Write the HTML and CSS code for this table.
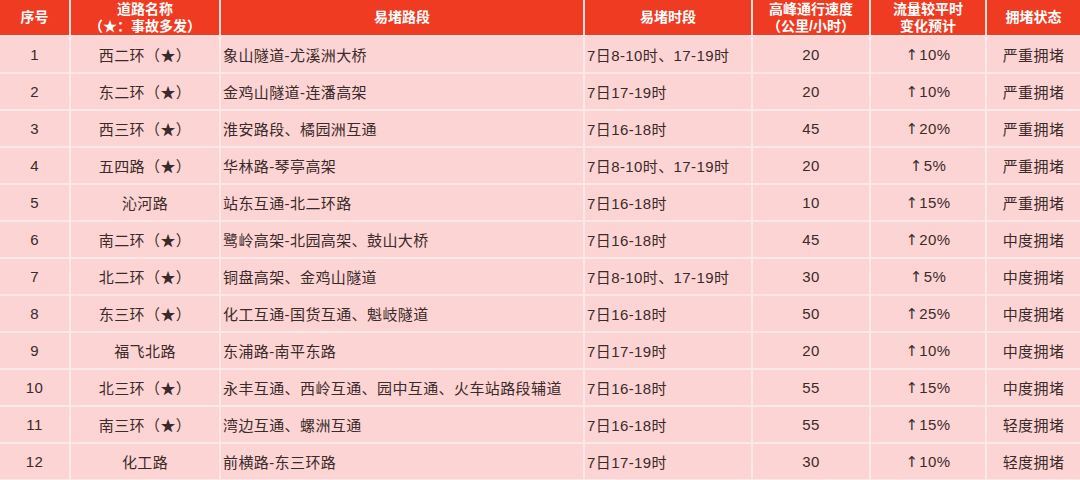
FILE: index.html
```html
<!DOCTYPE html>
<html lang="zh">
<head>
<meta charset="utf-8">
<link rel="stylesheet" href="styles.css">
</head>
<body>
<table class="traffic">
  <colgroup>
    <col class="c1"><col class="c2"><col class="c3"><col class="c4"><col class="c5"><col class="c6"><col class="c7">
  </colgroup>
  <thead>
    <tr>
      <th>序号</th>
      <th><div class="hl">道路名称</div><div class="hl">（★：事故多发）</div></th>
      <th>易堵路段</th>
      <th>易堵时段</th>
      <th><div class="hl">高峰通行速度</div><div class="hl">（公里/小时）</div></th>
      <th><div class="hl">流量较平时</div><div class="hl">变化预计</div></th>
      <th>拥堵状态</th>
    </tr>
  </thead>
  <tbody>
    <tr><td>1</td><td>西二环（★）</td><td class="l">象山隧道-尤溪洲大桥</td><td class="l">7日8-10时、17-19时</td><td>20</td><td><span class="up">↑</span>10%</td><td>严重拥堵</td></tr>
    <tr><td>2</td><td>东二环（★）</td><td class="l">金鸡山隧道-连潘高架</td><td class="l">7日17-19时</td><td>20</td><td><span class="up">↑</span>10%</td><td>严重拥堵</td></tr>
    <tr><td>3</td><td>西三环（★）</td><td class="l">淮安路段、橘园洲互通</td><td class="l">7日16-18时</td><td>45</td><td><span class="up">↑</span>20%</td><td>严重拥堵</td></tr>
    <tr><td>4</td><td>五四路（★）</td><td class="l">华林路-琴亭高架</td><td class="l">7日8-10时、17-19时</td><td>20</td><td><span class="up">↑</span>5%</td><td>严重拥堵</td></tr>
    <tr><td>5</td><td>沁河路</td><td class="l">站东互通-北二环路</td><td class="l">7日16-18时</td><td>10</td><td><span class="up">↑</span>15%</td><td>严重拥堵</td></tr>
    <tr><td>6</td><td>南二环（★）</td><td class="l">鹭岭高架-北园高架、鼓山大桥</td><td class="l">7日16-18时</td><td>45</td><td><span class="up">↑</span>20%</td><td>中度拥堵</td></tr>
    <tr><td>7</td><td>北二环（★）</td><td class="l">铜盘高架、金鸡山隧道</td><td class="l">7日8-10时、17-19时</td><td>30</td><td><span class="up">↑</span>5%</td><td>中度拥堵</td></tr>
    <tr><td>8</td><td>东三环（★）</td><td class="l">化工互通-国货互通、魁岐隧道</td><td class="l">7日16-18时</td><td>50</td><td><span class="up">↑</span>25%</td><td>中度拥堵</td></tr>
    <tr><td>9</td><td>福飞北路</td><td class="l">东浦路-南平东路</td><td class="l">7日17-19时</td><td>20</td><td><span class="up">↑</span>10%</td><td>中度拥堵</td></tr>
    <tr><td>10</td><td>北三环（★）</td><td class="l">永丰互通、西岭互通、园中互通、火车站路段辅道</td><td class="l">7日16-18时</td><td>55</td><td><span class="up">↑</span>15%</td><td>中度拥堵</td></tr>
    <tr><td>11</td><td>南三环（★）</td><td class="l">湾边互通、螺洲互通</td><td class="l">7日16-18时</td><td>55</td><td><span class="up">↑</span>15%</td><td>轻度拥堵</td></tr>
    <tr><td>12</td><td>化工路</td><td class="l">前横路-东三环路</td><td class="l">7日17-19时</td><td>30</td><td><span class="up">↑</span>10%</td><td>轻度拥堵</td></tr>
  </tbody>
</table>
</body>
</html>
```
FILE: styles.css
```css
html, body {
  margin: 0;
  padding: 0;
  background: #fdd4d4;
  overflow: hidden;
}
.traffic {
  width: 1080px;
  table-layout: fixed;
  border-collapse: collapse;
  font-family: "Liberation Sans", "Noto Sans CJK SC", sans-serif;
  color: #3a2a2a;
}
.c1 { width: 70px; }
.c2 { width: 150px; }
.c3 { width: 364px; }
.c4 { width: 168px; }
.c5 { width: 118px; }
.c6 { width: 116px; }
.c7 { width: 94px; }
.traffic th {
  background: #ef3b22;
  color: #fff;
  font-family: "Liberation Sans", "Noto Sans CJK SC", sans-serif;
  font-weight: 700;
  font-size: 14px;
  line-height: 17px;
  height: 35px;
  padding: 0;
  border: 2px solid #f9dcdc;
  border-top: none;
  text-align: center;
  vertical-align: middle;
  overflow: hidden;
}
.hl {
  height: 17px;
  line-height: 17px;
  white-space: nowrap;
}
.traffic td {
  background: #fdd4d4;
  font-size: 15px;
  letter-spacing: 0.4px;
  height: 35px;
  padding: 0 2px;
  border: 2px solid #fbe8e8;
  text-align: center;
  vertical-align: middle;
  white-space: nowrap;
}
.traffic td.l {
  text-align: left;
}
.traffic tr > :first-child { border-left: none; }
.traffic tr > :last-child { border-right: none; }
.up {
  font-family: "DejaVu Sans", sans-serif;
  font-size: 15px;
  margin-right: 1px;
}
```
